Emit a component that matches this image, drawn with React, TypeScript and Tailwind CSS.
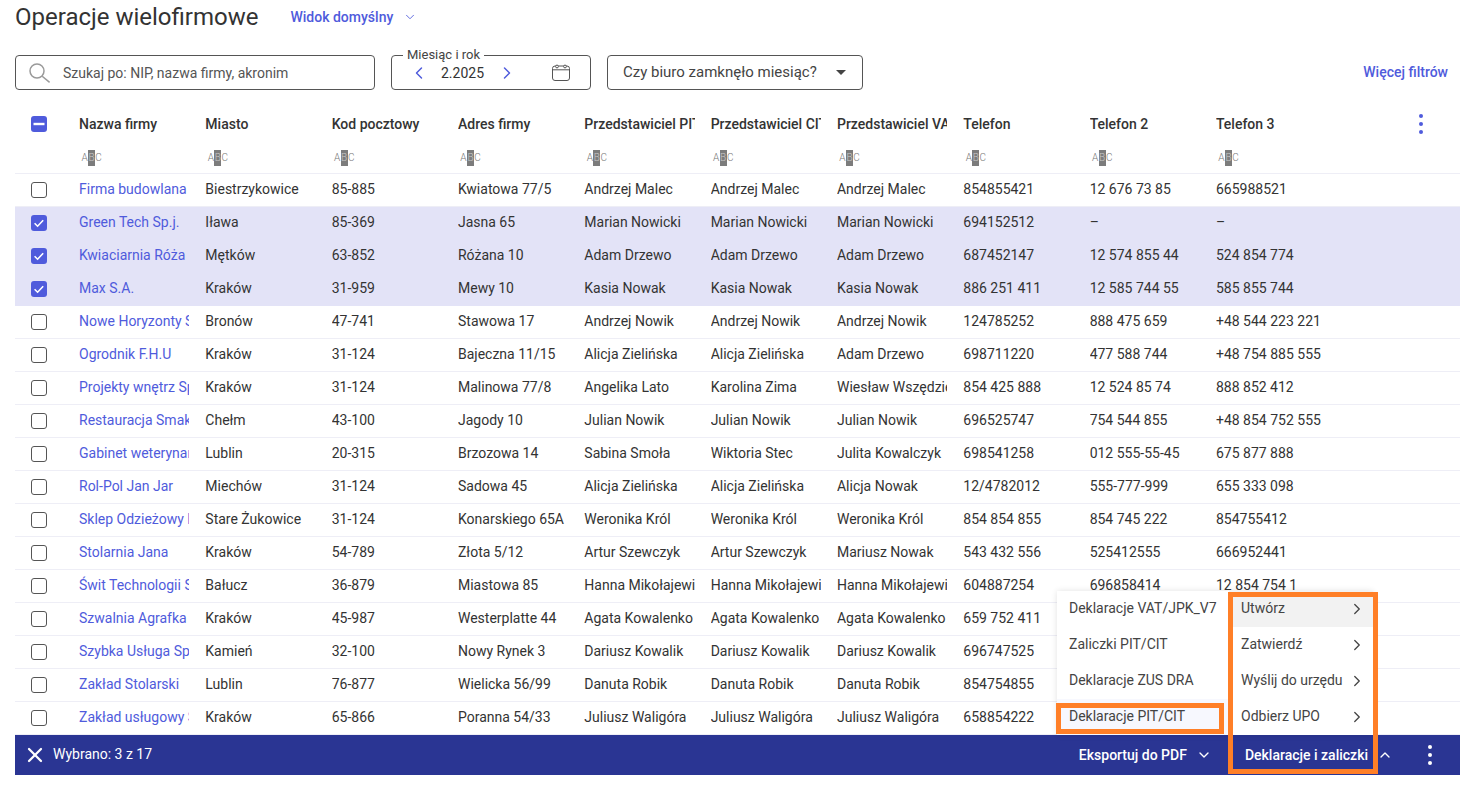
import { ChevronDown, ChevronLeft, ChevronRight, ChevronUp, X } from "lucide-react";

const COLUMNS = [
  "Nazwa firmy",
  "Miasto",
  "Kod pocztowy",
  "Adres firmy",
  "Przedstawiciel PIT",
  "Przedstawiciel CIT",
  "Przedstawiciel VAT",
  "Telefon",
  "Telefon 2",
  "Telefon 3",
];

const ROWS: { cells: string[]; selected?: boolean }[] = [
  { cells: ["Firma budowlana", "Biestrzykowice", "85-885", "Kwiatowa 77/5", "Andrzej Malec", "Andrzej Malec", "Andrzej Malec", "854855421", "12 676 73 85", "665988521"] },
  { cells: ["Green Tech Sp.j.", "Iława", "85-369", "Jasna 65", "Marian Nowicki", "Marian Nowicki", "Marian Nowicki", "694152512", "–", "–"], selected: true },
  { cells: ["Kwiaciarnia Róża", "Mętków", "63-852", "Różana 10", "Adam Drzewo", "Adam Drzewo", "Adam Drzewo", "687452147", "12 574 855 44", "524 854 774"], selected: true },
  { cells: ["Max S.A.", "Kraków", "31-959", "Mewy 10", "Kasia Nowak", "Kasia Nowak", "Kasia Nowak", "886 251 411", "12 585 744 55", "585 855 744"], selected: true },
  { cells: ["Nowe Horyzonty Sp. z o.o.", "Bronów", "47-741", "Stawowa 17", "Andrzej Nowik", "Andrzej Nowik", "Andrzej Nowik", "124785252", "888 475 659", "+48 544 223 221"] },
  { cells: ["Ogrodnik F.H.U", "Kraków", "31-124", "Bajeczna 11/15", "Alicja Zielińska", "Alicja Zielińska", "Adam Drzewo", "698711220", "477 588 744", "+48 754 885 555"] },
  { cells: ["Projekty wnętrz Sp. z o.o.", "Kraków", "31-124", "Malinowa 77/8", "Angelika Lato", "Karolina Zima", "Wiesław Wszędzie", "854 425 888", "12 524 85 74", "888 852 412"] },
  { cells: ["Restauracja Smak", "Chełm", "43-100", "Jagody 10", "Julian Nowik", "Julian Nowik", "Julian Nowik", "696525747", "754 544 855", "+48 854 752 555"] },
  { cells: ["Gabinet weterynaryjny", "Lublin", "20-315", "Brzozowa 14", "Sabina Smoła", "Wiktoria Stec", "Julita Kowalczyk", "698541258", "012 555-55-45", "675 877 888"] },
  { cells: ["Rol-Pol Jan Jar", "Miechów", "31-124", "Sadowa 45", "Alicja Zielińska", "Alicja Zielińska", "Alicja Nowak", "12/4782012", "555-777-999", "655 333 098"] },
  { cells: ["Sklep Odzieżowy Moda", "Stare Żukowice", "31-124", "Konarskiego 65A", "Weronika Król", "Weronika Król", "Weronika Król", "854 854 855", "854 745 222", "854755412"] },
  { cells: ["Stolarnia Jana", "Kraków", "54-789", "Złota 5/12", "Artur Szewczyk", "Artur Szewczyk", "Mariusz Nowak", "543 432 556", "525412555", "666952441"] },
  { cells: ["Świt Technologii Sp. z o.o.", "Bałucz", "36-879", "Miastowa 85", "Hanna Mikołajewicz", "Hanna Mikołajewicz", "Hanna Mikołajewicz", "604887254", "696858414", "12 854 754 1"] },
  { cells: ["Szwalnia Agrafka", "Kraków", "45-987", "Westerplatte 44", "Agata Kowalenko", "Agata Kowalenko", "Agata Kowalenko", "659 752 411", "", ""] },
  { cells: ["Szybka Usługa Sp. z o.o.", "Kamień", "32-100", "Nowy Rynek 3", "Dariusz Kowalik", "Dariusz Kowalik", "Dariusz Kowalik", "696747525", "", ""] },
  { cells: ["Zakład Stolarski", "Lublin", "76-877", "Wielicka 56/99", "Danuta Robik", "Danuta Robik", "Danuta Robik", "854754855", "", ""] },
  { cells: ["Zakład usługowy Sp. z o.o.", "Kraków", "65-866", "Poranna 54/33", "Juliusz Waligóra", "Juliusz Waligóra", "Juliusz Waligóra", "658854222", "", ""] },
];

const DECLARATIONS = ["Deklaracje VAT/JPK_V7", "Zaliczki PIT/CIT", "Deklaracje ZUS DRA", "Deklaracje PIT/CIT"];
const ACTIONS = ["Utwórz", "Zatwierdź", "Wyślij do urzędu", "Odbierz UPO"];

function Checkbox({ state }: { state?: "checked" | "mixed" }) {
  if (!state) {
    return <span className="block h-4 w-4 rounded-[3px] border-[1.5px] border-[#555] bg-white" />;
  }
  return (
    <span className="flex h-4 w-4 items-center justify-center rounded-[3px] bg-[#4f5bdc]">
      <svg viewBox="0 0 16 16" className="h-4 w-4" fill="none" stroke="white" strokeWidth="1.6">
        {state === "checked" ? <path d="M3.6 8.2l3 3 5.6-6" /> : <path d="M2.5 8h11" strokeWidth="2.4" />}
      </svg>
    </span>
  );
}

function AbcIcon() {
  return (
    <span className="flex h-4 w-[21px] items-center text-[10px] font-light leading-none text-[#777]">
      <span className="w-[7px] text-center">A</span>
      <span className="flex h-4 w-[7px] items-center justify-center bg-[#7c7c7c] text-[#c8c8c8]">B</span>
      <span className="w-[7px] text-center">C</span>
    </span>
  );
}

function Kebab({ className }: { className: string }) {
  return (
    <svg viewBox="0 0 4 20" className={`h-5 w-1 ${className}`} fill="currentColor">
      <circle cx="2" cy="2" r="2" />
      <circle cx="2" cy="10" r="2" />
      <circle cx="2" cy="18" r="2" />
    </svg>
  );
}

function SearchIcon() {
  return (
    <svg viewBox="0 0 22 20" className="h-5 w-[22px]" fill="none" stroke="#9a9a9a" strokeWidth="1.5">
      <circle cx="8" cy="8" r="7" />
      <path d="M13.2 13.2 20.6 19.4" />
    </svg>
  );
}

function CalendarIcon() {
  return (
    <svg viewBox="0 0 18 17" className="h-[17px] w-[18px]" fill="none" stroke="#555" strokeWidth="1">
      <rect x="0.5" y="2" width="17" height="14.5" rx="2.5" />
      <path d="M0.5 5.8h17" />
      <circle cx="5" cy="2.5" r="1.4" fill="white" />
      <circle cx="13" cy="2.5" r="1.4" fill="white" />
    </svg>
  );
}

export default function App() {
  return (
    <div className="w-[1476px] bg-white pl-[15px] pr-4 font-['Roboto',sans-serif] text-sm text-[#333]">
      {/* Title */}
      <div className="flex h-[34px] items-center">
        <h1 className="text-2xl leading-[34px] text-[#333]">Operacje wielofirmowe</h1>
        <button className="ml-8 flex items-center font-medium text-[#4f5bdc]">
          Widok domyślny
          <ChevronDown className="ml-[10px] h-3.5 w-3.5" strokeWidth={1.5} />
        </button>
      </div>

      {/* Filters */}
      <div className="mt-[21px] flex h-[35px] items-stretch">
        <label className="flex w-[360px] items-center rounded border border-[#555] pl-[13px]">
          <SearchIcon />
          <span className="ml-3 text-[#555]">Szukaj po: NIP, nazwa firmy, akronim</span>
        </label>
        <div className="relative ml-4 flex w-[200px] items-center rounded border border-[#555]">
          <span className="absolute -top-2 left-[11px] bg-white px-[4px] text-[13px] leading-[14px] text-[#444]">Miesiąc i rok</span>
          <ChevronLeft className="ml-[17px] h-5 w-5 text-[#4f5bdc]" strokeWidth={1.75} />
          <span className="ml-3 text-[#333]">2.2025</span>
          <ChevronRight className="ml-[13px] h-5 w-5 text-[#4f5bdc]" strokeWidth={1.75} />
          <span className="ml-[35px]">
            <CalendarIcon />
          </span>
        </div>
        <div className="ml-4 flex w-[256px] items-center rounded border border-[#555] pl-[15px]">
          <span className="text-[15px] text-[#444]">Czy biuro zamknęło miesiąc?</span>
          <svg viewBox="0 0 10 5" className="ml-[19px] h-[5px] w-2.5 fill-[#444]">
            <path d="M0 0h10L5 5z" />
          </svg>
        </div>
        <button className="ml-auto mr-3 pb-[1px] font-medium text-[#4f5bdc]">Więcej filtrów</button>
      </div>

      {/* Table header */}
      <div className="mt-[17px] flex h-[33px] items-center">
        <div className="flex w-12 shrink-0 justify-center">
          <Checkbox state="mixed" />
        </div>
        {COLUMNS.map((col) => (
          <div key={col} className="w-[126.33px] shrink-0 pl-4 font-medium text-[#333]">
            <div className="w-[110.33px] overflow-hidden whitespace-nowrap">{col}</div>
          </div>
        ))}
        <Kebab className="ml-[93px] text-[#4f5bdc]" />
      </div>
      <div className="flex h-[34px] items-center border-b border-[#eeeef6] pt-[3px]">
        <div className="w-12 shrink-0" />
        {COLUMNS.map((col) => (
          <div key={col} className="w-[126.33px] shrink-0 pl-[18px]">
            <AbcIcon />
          </div>
        ))}
      </div>

      {/* Rows */}
      {ROWS.map(({ cells, selected }) => (
        <div
          key={cells[0]}
          className={`flex h-[33px] items-center border-b ${selected ? "border-[#e3e3f7] bg-[#e3e3f7]" : "border-[#eeeef6]"}`}
        >
          <div className="flex w-12 shrink-0 justify-center">
            <Checkbox state={selected ? "checked" : undefined} />
          </div>
          {cells.map((cell, i) => (
            <div key={i} className="w-[126.33px] shrink-0 pb-[2px] pl-4">
              <div className={`w-[110.33px] overflow-hidden whitespace-nowrap ${i === 0 ? "text-[#4f5bdc]" : ""}`}>{cell}</div>
            </div>
          ))}
        </div>
      ))}

      {/* Selection bar */}
      <div className="relative flex h-10 items-center bg-[#2a3593] text-white">
        <X className="ml-2 h-6 w-6" strokeWidth={2.25} />
        <span className="ml-[6px] pb-[2px]">Wybrano: 3 z 17</span>
        <button className="ml-auto flex items-center font-medium">
          Eksportuj do PDF
          <ChevronDown className="ml-[9px] h-4 w-4" strokeWidth={2} />
        </button>
        <button className="ml-[33px] flex items-center font-medium">
          Deklaracje i zaliczki
          <ChevronUp className="ml-[9px] h-4 w-4" strokeWidth={2} />
        </button>
        <Kebab className="ml-[35px] mr-[28px] text-white" />

        {/* Open menus */}
        <div className="absolute bottom-full right-[87px] flex text-[#444] shadow-[0_0_6px_rgba(0,0,0,0.12)]">
          <ul className="w-[172px] rounded-tl bg-white">
            {DECLARATIONS.map((item, i) => (
              <li key={item} className={`flex h-9 items-center pb-0.5 pl-3 ${i === 3 ? "bg-[#f7f8fe]" : ""}`}>
                {item}
              </li>
            ))}
          </ul>
          <ul className="w-[144px] bg-white">
            {ACTIONS.map((item, i) => (
              <li key={item} className={`flex h-9 items-center justify-between pl-3 pr-[7px] ${i === 0 ? "bg-[#f2f2f2]" : ""}`}>
                <span className="pb-0.5">{item}</span>
                <ChevronRight className="h-[18px] w-[18px] text-[#444]" strokeWidth={1.75} />
              </li>
            ))}
          </ul>
        </div>

        {/* Orange annotation frames */}
        <div className="pointer-events-none absolute -top-[143px] left-[1213px] h-[182px] w-[150px] border-[5px] border-[#ff7f27]" />
        <div className="pointer-events-none absolute -top-[32px] left-[1041px] h-[31px] w-[168px] border-[5px] border-[#ff7f27]" />
      </div>
    </div>
  );
}
